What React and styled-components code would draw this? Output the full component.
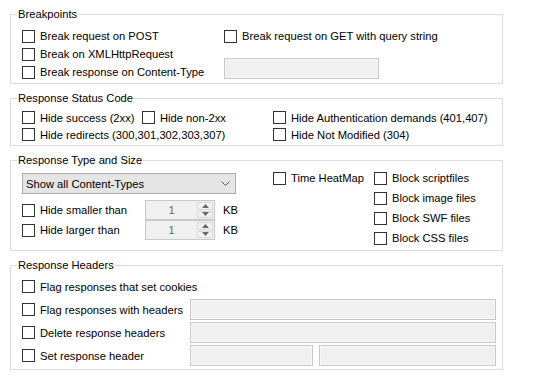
import React from 'react'
import styled, { createGlobalStyle } from 'styled-components'

const GlobalStyle = createGlobalStyle`
  body {
    margin: 0;
    background: #fff;
    font-family: "Liberation Sans", Arial, sans-serif;
    font-size: 11.2px;
    color: #000;
  }
`

const Page = styled.div`
  width: 540px;
  height: 376px;
  box-sizing: border-box;
  padding: 7px 0 0 10px;
`

const Group = styled.fieldset`
  width: 493px;
  height: ${p => p.$height}px;
  box-sizing: border-box;
  margin: 0 0 7px;
  padding: 0;
  min-width: 0;
  border: 1px solid #dcdcdc;
`

const Legend = styled.legend`
  margin-left: 6px;
  padding: 0 1px;
  line-height: 14px;
  height: 14px;
`

const Body = styled.div`
  display: grid;
  grid-template-columns: ${p => p.$cols};
  padding: ${p => p.$pad};
  align-items: start;
`

const Column = styled.div`
  display: flex;
  flex-direction: column;
  gap: ${p => p.$gap || 0}px;
  padding-top: ${p => p.$top || 0}px;
`

const Row = styled.div`
  display: flex;
  align-items: center;
  height: ${p => p.$h}px;
`

const Check = styled.label`
  display: inline-flex;
  align-items: center;
  gap: 5px;
  white-space: nowrap;
  width: ${p => (p.$w ? `${p.$w}px` : 'auto')};
  flex-shrink: 0;
`

const Box = styled.span`
  width: 13px;
  height: 13px;
  box-sizing: border-box;
  border: 1px solid #333;
  background: #fff;
  flex-shrink: 0;
`

const TextBox = styled.div`
  width: ${p => p.$w}px;
  height: 21px;
  box-sizing: border-box;
  border: 1px solid #c8c8c8;
  box-shadow: inset 0 0 0 1px #f7f7f7;
  background: #f0f0f0;
  margin-top: ${p => p.$mt || 0}px;
`

const Select = styled.div`
  width: 214px;
  height: 21px;
  box-sizing: border-box;
  border: 1px solid #adadad;
  background: #e5e5e5;
  display: flex;
  align-items: center;
  justify-content: space-between;
  padding: 0 5px 0 3px;
`

const Spin = styled.div`
  width: 70px;
  height: 20px;
  box-sizing: border-box;
  border: 1px solid #c8c8c8;
  background: #f0f0f0;
  display: flex;
`

const SpinValue = styled.div`
  flex: 1;
  display: flex;
  align-items: center;
  justify-content: center;
  color: #6d6d6d;
`

const SpinButtons = styled.div`
  width: 16px;
  display: flex;
  flex-direction: column;
  gap: 1px;
  padding: 1px 1px 1px 0;
`

const SpinButton = styled.div`
  flex: 1;
  display: flex;
  align-items: center;
  justify-content: center;
  border: 1px solid #dadada;
  background: #f0f0f0;
`

const Unit = styled.span`
  margin-left: 8px;
`

const Pair = styled.div`
  display: flex;
  gap: 6px;
`

const CheckItem = ({ children, w }) => (
  <Check $w={w}>
    <Box />
    <span>{children}</span>
  </Check>
)

const Arrow = ({ up }) => (
  <svg width="7" height="4" viewBox="0 0 7 4">
    <path d={up ? 'M0 4 L3.5 0 L7 4 Z' : 'M0 0 L3.5 4 L7 0 Z'} fill="#6a6a6a" />
  </svg>
)

const SpinBox = () => (
  <Spin>
    <SpinValue>1</SpinValue>
    <SpinButtons>
      <SpinButton><Arrow up /></SpinButton>
      <SpinButton><Arrow /></SpinButton>
    </SpinButtons>
  </Spin>
)

export default function App() {
  return (
    <Page>
      <GlobalStyle />

      <Group $height={77}>
        <Legend>Breakpoints</Legend>
        <Body $cols="202px auto" $pad="6px 0 0 11px">
          <Column>
            <Row $h={18}><CheckItem>Break request on POST</CheckItem></Row>
            <Row $h={18}><CheckItem>Break on XMLHttpRequest</CheckItem></Row>
            <Row $h={18}><CheckItem>Break response on Content-Type</CheckItem></Row>
          </Column>
          <Column>
            <Row $h={18}><CheckItem>Break request on GET with query string</CheckItem></Row>
            <TextBox $w={155} $mt={13} />
          </Column>
        </Body>
      </Group>

      <Group $height={55}>
        <Legend>Response Status Code</Legend>
        <Body $cols="251px auto" $pad="4px 0 0 11px">
          <Column>
            <Row $h={17}>
              <CheckItem w={120}>Hide success (2xx)</CheckItem>
              <CheckItem>Hide non-2xx</CheckItem>
            </Row>
            <Row $h={17}><CheckItem>Hide redirects (300,301,302,303,307)</CheckItem></Row>
          </Column>
          <Column>
            <Row $h={17}><CheckItem>Hide Authentication demands (401,407)</CheckItem></Row>
            <Row $h={17}><CheckItem>Hide Not Modified (304)</CheckItem></Row>
          </Column>
        </Body>
      </Group>

      <Group $height={98}>
        <Legend>Response Type and Size</Legend>
        <Body $cols="251px 101px auto" $pad="0 0 0 11px">
          <Column $top={6} $gap={6}>
            <Select>
              <span>Show all Content-Types</span>
              <svg width="9" height="5" viewBox="0 0 9 5">
                <path d="M0.5 0.5 L4.5 4.5 L8.5 0.5" fill="none" stroke="#555" strokeWidth="1" />
              </svg>
            </Select>
            <Column>
              <Row $h={20}>
                <CheckItem w={123}>Hide smaller than</CheckItem>
                <SpinBox />
                <Unit>KB</Unit>
              </Row>
              <Row $h={20}>
                <CheckItem w={123}>Hide larger than</CheckItem>
                <SpinBox />
                <Unit>KB</Unit>
              </Row>
            </Column>
          </Column>
          <Column $top={1}>
            <Row $h={20}><CheckItem>Time HeatMap</CheckItem></Row>
          </Column>
          <Column $top={1}>
            <Row $h={20}><CheckItem>Block scriptfiles</CheckItem></Row>
            <Row $h={20}><CheckItem>Block image files</CheckItem></Row>
            <Row $h={20}><CheckItem>Block SWF files</CheckItem></Row>
            <Row $h={20}><CheckItem>Block CSS files</CheckItem></Row>
          </Column>
        </Body>
      </Group>

      <Group $height={112}>
        <Legend>Response Headers</Legend>
        <Body $cols="168px 306px" $pad="4px 0 0 11px">
          <Column $gap={2}>
            <Row $h={21}><CheckItem>Flag responses that set cookies</CheckItem></Row>
            <Row $h={21}><CheckItem>Flag responses with headers</CheckItem></Row>
            <Row $h={21}><CheckItem>Delete response headers</CheckItem></Row>
            <Row $h={21}><CheckItem>Set response header</CheckItem></Row>
          </Column>
          <Column $gap={2} $top={23}>
            <TextBox $w={306} />
            <TextBox $w={306} />
            <Pair>
              <TextBox $w={123} />
              <TextBox $w={177} />
            </Pair>
          </Column>
        </Body>
      </Group>
    </Page>
  )
}
